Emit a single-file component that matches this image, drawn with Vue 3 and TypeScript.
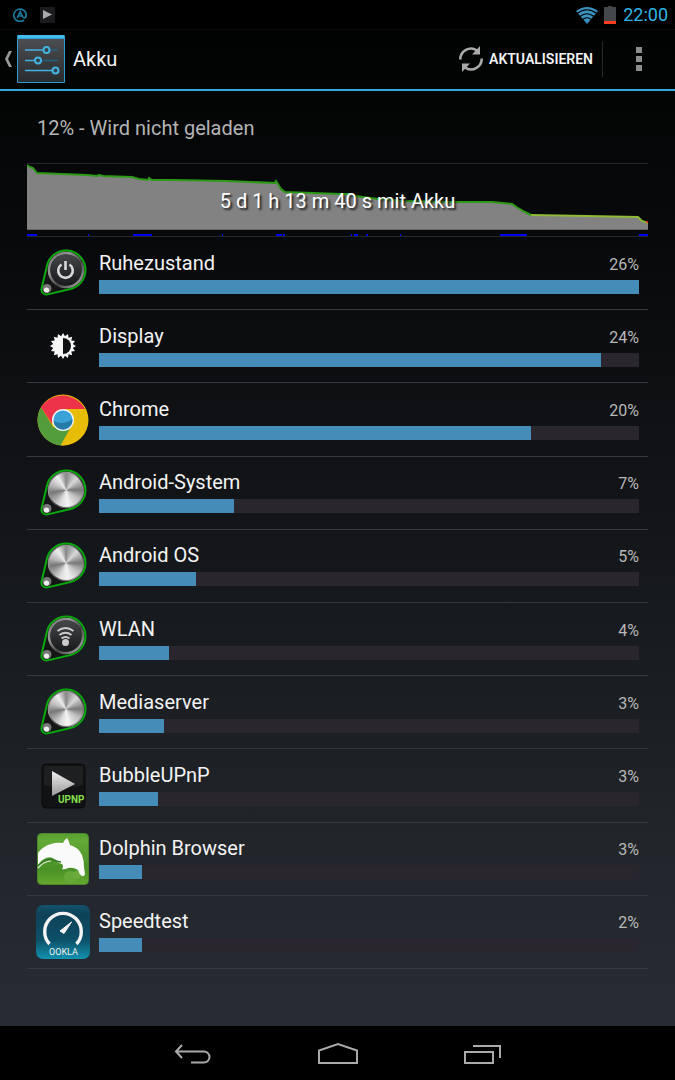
<script setup lang="ts">
type IconKind = 'power' | 'display' | 'chrome' | 'metal' | 'wifi' | 'upnp' | 'dolphin' | 'speed'

interface Consumer {
  name: string
  percent: number
  bar: number
  icon: IconKind
}

const consumers: Consumer[] = [
  { name: 'Ruhezustand', percent: 26, bar: 100, icon: 'power' },
  { name: 'Display', percent: 24, bar: 93, icon: 'display' },
  { name: 'Chrome', percent: 20, bar: 80, icon: 'chrome' },
  { name: 'Android-System', percent: 7, bar: 25, icon: 'metal' },
  { name: 'Android OS', percent: 5, bar: 18, icon: 'metal' },
  { name: 'WLAN', percent: 4, bar: 13, icon: 'wifi' },
  { name: 'Mediaserver', percent: 3, bar: 12, icon: 'metal' },
  { name: 'BubbleUPnP', percent: 3, bar: 11, icon: 'upnp' },
  { name: 'Dolphin Browser', percent: 3, bar: 8, icon: 'dolphin' },
  { name: 'Speedtest', percent: 2, bar: 8, icon: 'speed' },
]

const isKnob = (kind: IconKind): boolean => ['power', 'metal', 'wifi'].includes(kind)

// Screen-on periods as [start, length] on the 621-unit time axis
const activity: [number, number][] = [
  [0, 10], [61, 1], [106, 19], [195, 1], [249, 6], [256, 2],
  [324, 1], [327, 4], [339, 2], [373, 1], [473, 27], [612, 9],
]

const level =
  'M0 1 L3 3 L6 4 L10 9 L60 11 L70 12 L72 11 L76 12 L105 13 L112 15 L121 16 L122 14 L125 16 L146 16 L200 17 L248 19 L249 17 L254 25 L258 28 L313 30 L325 30 L328 32 L351 35 L375 37 L420 38 L465 38 L485 40 L491 44 L498 48 L504 51'
const lowTail = 'L560 52 L611 53 L615 57 L621 59'
const levelLow = 'M504 51 ' + lowTail
const levelArea = level + ' ' + lowTail + ' L621 66 L0 66Z'

const gear: string = Array.from({ length: 32 }, (_, i) => {
  const r = i % 2 === 0 ? 13 : 10
  const a = (i * Math.PI) / 16
  return `${(27 + r * Math.cos(a)).toFixed(2)},${(27 + r * Math.sin(a)).toFixed(2)}`
}).join(' ')
</script>

<template>
  <div class="screen">
    <div class="status">
      <svg class="at" viewBox="0 0 14 14" aria-hidden="true">
        <path d="M11 12A6.200 6.200 0 1 1 13.200 7Q13.200 9.800 11.300 9.800Q10 9.800 9.300 8L7.200 3.800L4.300 10M5.400 8H9" fill="none" stroke="#1b7899" stroke-width="1.700" />
      </svg>
      <svg class="play" viewBox="0 0 15 16" aria-hidden="true">
        <rect width="15" height="16" rx="1" fill="#1b1b1d" />
        <path d="M3 3L12 7.500L3 12Z" fill="#aaa" />
      </svg>
      <span class="grow"></span>
      <svg class="wifi" viewBox="0 0 22 17" aria-hidden="true">
        <path d="M0 4Q11-4 22 4L11 17Z" fill="#3a91bd" />
        <path d="M1 6.500Q11-1 21 6.500M4 9.500Q11 4 18 9.500M6.500 12.500Q11 9 15.500 12.500" fill="none" stroke="#000" stroke-width="1.200" />
      </svg>
      <svg class="battery" viewBox="0 0 12 18" aria-hidden="true">
        <path d="M4 0H8V1H12V15H0V1H4Z" fill="#45484b" />
        <path d="M0 15H12V18H0Z" fill="#fb3e22" />
      </svg>
      <span class="clock">22:00</span>
    </div>

    <header class="bar">
      <button class="up" type="button" aria-label="Zurück zu Einstellungen">
        <svg class="caret" viewBox="0 0 9 18" aria-hidden="true">
          <path d="M5 1H8L4 9L8 17H5L1 9Z" fill="#999" />
        </svg>
        <svg class="app" viewBox="0 0 48 48" aria-hidden="true">
          <defs>
            <linearGradient id="tile" x1="0" y1="0" x2="0" y2="1">
              <stop offset="0" stop-color="#4b4d50" /><stop offset="1" stop-color="#292b2e" />
            </linearGradient>
          </defs>
          <rect width="48" height="48" rx="1" fill="#2c9dcc" />
          <rect x="1" y="0" width="46" height="3" fill="#42bcec" />
          <rect x="1" y="4" width="46" height="43" fill="url(#tile)" />
          <path d="M8 15H27M8 25.500H19M8 35.500H37" stroke="#45b3df" stroke-width="1.500" />
          <path d="M32 15H41M24 25.500H41" stroke="#23627d" stroke-width="1.500" />
          <g fill="#34404a" stroke="#45b3df" stroke-width="2">
            <circle cx="29.500" cy="15" r="3" /><circle cx="21" cy="25.500" r="3" /><circle cx="38.500" cy="35.500" r="3" />
          </g>
        </svg>
        <span class="title">Akku</span>
      </button>
      <button class="refresh" type="button">
        <svg viewBox="0 0 26 26" aria-hidden="true">
          <path d="M2.300 13.500A10.700 10.700 0 0 1 19 4.500M23.700 12.500A10.700 10.700 0 0 1 7 21.500" fill="none" stroke="#aaa" stroke-width="2.600" />
          <path d="M22 0V8.500H14ZM4 26V17.500H12Z" fill="#aaa" />
        </svg>
        <span>AKTUALISIEREN</span>
      </button>
      <button class="more" type="button" aria-label="Weitere Optionen">
        <svg viewBox="0 0 6 24" aria-hidden="true">
          <path d="M0 0H6V6H0ZM0 9H6V15H0ZM0 18H6V24H0Z" fill="#8c8c8c" />
        </svg>
      </button>
    </header>

    <main>
      <p class="summary">12% - Wird nicht geladen</p>
      <section class="chart">
        <svg viewBox="0 0 621 72" preserveAspectRatio="none" aria-hidden="true">
          <path :d="levelArea" fill="#828282" />
          <path d="M0 65.500H621" stroke="#666" />
          <path :d="level" fill="none" stroke="#2c9a17" stroke-width="2" />
          <path :d="levelLow" fill="none" stroke="#8dbb35" stroke-width="2" />
          <circle cx="620" cy="58" r="1" fill="#f22" />
          <rect v-for="[x, w] in activity" :key="x" :x="x" y="70" :width="w" height="2" fill="#0000f4" />
        </svg>
        <p>5 d 1 h 13 m 40 s mit Akku</p>
      </section>

      <ul class="list">
        <li v-for="(item, i) in consumers" :key="item.name">
          <svg class="icon" viewBox="0 0 54 54" aria-hidden="true">
            <template v-if="isKnob(item.icon)">
              <defs>
                <linearGradient :id="'rim' + i" x1="0" y1="0" x2="1" y2="1">
                  <stop offset="0" stop-color="#6c6c6c" /><stop offset=".3" stop-color="#999" />
                  <stop offset=".6" stop-color="#444" /><stop offset="1" stop-color="#bbb" />
                </linearGradient>
                <linearGradient :id="'face' + i" x1="0" y1="0" x2="0" y2="1">
                  <stop offset="0" stop-color="#444648" /><stop offset="1" stop-color="#17191c" />
                </linearGradient>
              </defs>
              <path d="M11 19.500A19.500 19.500 0 1 1 34.500 43L11.700 48.400A5 5 0 0 1 5.600 42.300Z" fill="#151515" stroke="#07a90b" stroke-width="2" />
              <circle cx="30" cy="24" r="17" fill="#202020" :stroke="`url(#rim${i})`" stroke-width="2.500" />
              <circle cx="11" cy="42.500" r="4.500" fill="#777" />
              <circle cx="10.500" cy="44" r="2.600" fill="#eee" />
              <foreignObject v-if="item.icon === 'metal'" x="13" y="7" width="34" height="34">
                <div class="metal"></div>
              </foreignObject>
              <template v-else>
                <circle cx="30" cy="24" r="15.500" :fill="`url(#face${i})`" />
                <path v-if="item.icon === 'power'" d="M25.500 18.500A7.300 7.300 0 1 0 33.500 18.500M29.500 15V24" fill="none" stroke="#d8d8d8" stroke-width="2.600" />
                <g v-else fill="none" stroke="#ccc" stroke-width="1.900">
                  <path d="M21.500 19Q29.500 13 37.500 19M23.500 23Q29.500 18.500 35.500 23M25.500 26.500Q29.500 23.500 33.500 26.500" />
                  <circle cx="29.500" cy="30.500" r="3.500" fill="#ccc" stroke="none" />
                </g>
              </template>
            </template>

            <template v-else-if="item.icon === 'display'">
              <polygon :points="gear" fill="#f7f7f7" />
              <path d="M27 19A8 8 0 0 1 27 35Z" fill="#111214" />
            </template>

            <template v-else-if="item.icon === 'chrome'">
              <circle cx="27" cy="27" r="25.500" fill="#e7bd08" />
              <path d="M5 14.300L17 34L27 36L36 32L24.500 52.400A25.500 25.500 0 0 1 5 14.300Z" fill="#529c3b" />
              <path d="M27 16H48.500A25.500 25.500 0 0 1 25 52.400L37 32Z" fill="#e7bd08" />
              <path d="M5 14.300L16 31V27H27V16H49A25.500 25.500 0 0 0 5 14.300Z" fill="#ec3349" />
              <circle cx="27" cy="27" r="11" fill="#f3f3f3" />
              <circle cx="27" cy="27" r="9.500" fill="#39a2d6" />
              <path d="M17.500 28Q27 33 36.500 26A9.500 9.500 0 0 1 17.500 28Z" fill="#277ba9" />
            </template>

            <template v-else-if="item.icon === 'upnp'">
              <defs>
                <linearGradient id="arrow" x1="0" y1="0" x2="0" y2="1">
                  <stop offset="0" stop-color="#eee" /><stop offset="1" stop-color="#999" />
                </linearGradient>
              </defs>
              <rect x="6" y="5" width="43" height="44" rx="4" fill="#111214" stroke="#090909" />
              <path d="M8 7H47V26Q27 32 8 26Z" fill="#1d1f21" />
              <path d="M16 12L39 25L16 37Z" fill="url(#arrow)" />
              <text x="22" y="44" class="upnp">UPNP</text>
            </template>

            <template v-else-if="item.icon === 'dolphin'">
              <defs>
                <linearGradient id="grass" x1="0" y1="0" x2="0" y2="1">
                  <stop offset="0" stop-color="#58a02f" /><stop offset=".15" stop-color="#63a938" />
                  <stop offset=".7" stop-color="#4a9227" /><stop offset="1" stop-color="#65a82e" />
                </linearGradient>
              </defs>
              <rect x="1.500" y="1.500" width="51" height="51" rx="4" fill="url(#grass)" stroke="#4b862e" />
              <circle cx="34" cy="45" r="6" fill="#65a838" /><circle cx="41" cy="43" r="4" fill="#6dad3e" />
              <path d="M2 21Q7 14 15 12Q20 10 27 11Q28 8 31 6Q33 9 34 13Q42 15 46 23Q48 28 48 35L49 42Q48 45 46 44Q43 42 42 38Q37 35 32 36Q29 38 26 37Q28 34 26 32Q21 31 18 27Q15 24 10 26Q5 28 2 33Z" fill="#fafafa" />
              <path d="M2 34Q11 25 18 28Q22 30 25 30" fill="none" stroke="#2f7821" stroke-width="1.500" />
              <path d="M2 36Q8 29 15 29" fill="none" stroke="#d9ead0" stroke-width="1.200" />
            </template>

            <template v-else>
              <defs>
                <linearGradient id="sea" x1="0" y1="0" x2="0" y2="1">
                  <stop offset="0" stop-color="#12536b" /><stop offset=".18" stop-color="#0e4258" />
                  <stop offset=".65" stop-color="#0d5069" /><stop offset="1" stop-color="#1292b1" />
                </linearGradient>
              </defs>
              <rect width="54" height="54" rx="7" fill="url(#sea)" />
              <path d="M13.500 39A18.300 18.300 0 1 1 40.500 39" fill="none" stroke="#f4f4f4" stroke-width="3.400" />
              <path d="M24 26L35.500 17L28 28.500Z" fill="#f4f4f4" stroke="#f4f4f4" stroke-linejoin="round" />
              <text x="13" y="50" class="ookla">OOKLA</text>
            </template>
          </svg>
          <div class="detail">
            <div class="line">
              <span class="name">{{ item.name }}</span>
              <span class="percent">{{ item.percent }}%</span>
            </div>
            <div class="track" role="progressbar" :aria-label="item.name" :aria-valuenow="item.percent">
              <div class="fill" :style="{ width: item.bar + '%' }"></div>
            </div>
          </div>
        </li>
      </ul>
    </main>

    <nav>
      <button type="button" aria-label="Zurück">
        <svg viewBox="0 0 40 24" aria-hidden="true">
          <path d="M9 4L3 10.500L9 17M3 10.500H31A5.500 5.500 0 0 1 31 21.500H18" />
        </svg>
      </button>
      <button type="button" aria-label="Startseite">
        <svg viewBox="0 0 40 24" aria-hidden="true"><path d="M1 22V9.500L20 3L39 9.500V22Z" /></svg>
      </button>
      <button type="button" aria-label="Letzte Apps">
        <svg viewBox="0 0 40 24" aria-hidden="true"><path d="M2 11H30V22H2ZM10 5H37V17" /></svg>
      </button>
    </nav>
  </div>
</template>

<style scoped>
.screen {
  display: flex;
  flex-direction: column;
  min-height: 100vh;
  background: linear-gradient(#000 0, #030505 90px, #08090b 240px, #16191d 600px, #22262b 850px, #272b34 1020px);
  color: #f3f3f3;
  font-family: Roboto, "Noto Sans", sans-serif;
}
p, ul { margin: 0; padding: 0; }
svg { display: block; flex: none; }
button {
  margin: 0;
  padding: 0;
  border: 0;
  background: none;
  color: inherit;
  font: inherit;
}
.status {
  display: flex;
  align-items: center;
  box-sizing: border-box;
  height: 29px;
  padding: 1px 7px 0 13px;
  background: #000;
}
.at { width: 14px; height: 14px; margin-right: 13px; }
.play { width: 15px; height: 16px; }
.grow { flex: 1; }
.wifi { width: 22px; height: 17px; margin-right: 6px; }
.battery { width: 12px; height: 18px; margin-right: 7px; }
.clock { color: #33b5e5; font-size: 18px; line-height: 28px; }
.bar {
  display: flex;
  align-items: center;
  box-sizing: border-box;
  height: 62px;
  border-bottom: 2px solid #2fa8dc;
  box-shadow: inset 0 1px #0b0b0b;
}
.up { display: flex; align-items: center; margin-right: auto; padding-left: 4px; }
.caret { width: 9px; height: 18px; margin-right: 4px; }
.app { width: 48px; height: 48px; margin-right: 8px; }
.title { font-size: 20px; line-height: 24px; }
.refresh {
  display: flex;
  align-items: center;
  height: 36px;
  padding-right: 9px;
  border-right: 1px solid #25252b;
  font-size: 14px;
  font-weight: 600;
}
.refresh svg { width: 26px; height: 26px; margin-right: 5px; }
.more { display: flex; justify-content: center; width: 72px; }
.more svg { width: 6px; height: 24px; }
main {
  flex: 1;
  display: flex;
  flex-direction: column;
  padding: 0 27px 57px;
}
.summary {
  padding: 25px 10px 22px;
  color: #b4b4b4;
  font-size: 20px;
  line-height: 25px;
}
.chart {
  display: grid;
  align-items: center;
  border-top: 1px solid #25282b;
  border-bottom: 1px solid #25282b;
}
.chart svg, .chart p { grid-area: 1 / 1; }
.chart svg { width: 100%; height: 72px; }
.chart p {
  position: relative;
  padding-top: 2px;
  color: #fff;
  font-size: 20px;
  line-height: 24px;
  text-align: center;
  text-shadow: 2px 2px 2px #222;
}
.list { flex: 1; display: flex; flex-direction: column; list-style: none; }
.list li {
  flex: 1;
  display: flex;
  align-items: center;
  min-height: 60px;
  padding: 0 9px;
  border-bottom: 1px solid #363a3e;
}
.icon { width: 54px; height: 54px; margin-right: 9px; }
.detail { flex: 1; padding-bottom: 2px; }
.line {
  display: flex;
  align-items: baseline;
  justify-content: space-between;
  height: 29px;
  line-height: 24px;
}
.name { font-size: 20px; }
.percent { color: #b8b8b8; font-size: 16px; }
.track { height: 14px; background: #29262d; }
.fill { height: 100%; background: #468cb9; }
.metal {
  width: 34px;
  height: 34px;
  border-radius: 50%;
  background: conic-gradient(#888, #d8d8d8 12%, #aaa 18%, #777 25%, #bbb 34%, #f4f4f4 48%, #ddd 56%, #aaa 64%, #777 72%, #b8b8b8 80%, #eee 91%, #888);
}
.upnp { fill: #83df4c; font: 700 10px Roboto, sans-serif; }
.ookla { fill: #f1f1f1; font: 9px Roboto, sans-serif; }
nav {
  display: flex;
  justify-content: center;
  height: 54px;
  background: #000;
}
nav button { display: flex; align-items: center; justify-content: center; width: 145px; }
nav svg { width: 40px; height: 24px; fill: none; stroke: #aaa; stroke-width: 2px; }
</style>

<style>
body { margin: 0; background: #000; }
</style>
